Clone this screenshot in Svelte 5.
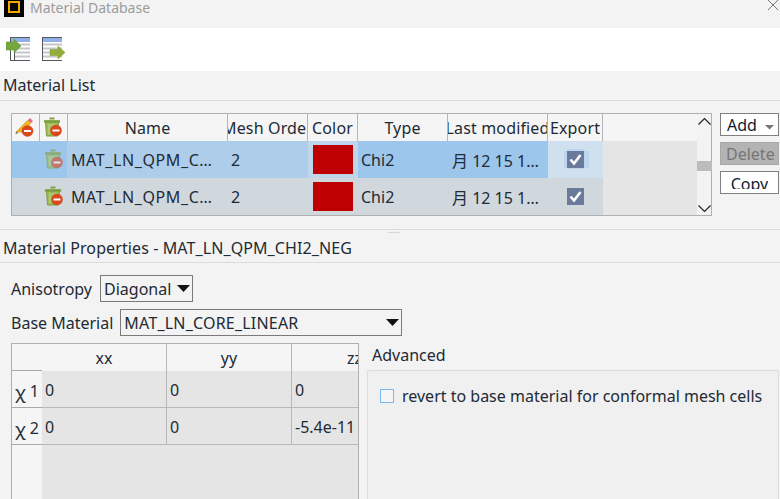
<script>
  const cols = [
    { label: 'Name', w: 160 },
    { label: 'Mesh Order', w: 80 },
    { label: 'Color', w: 50 },
    { label: 'Type', w: 90 },
    { label: 'Last modified', w: 100 },
    { label: 'Export', w: 55 }
  ];
  const rows = [{ sel: true }, { sel: false }];
  const chi = [
    { h: '1', v: ['0', '0', '0'] },
    { h: '2', v: ['0', '0', '-5.4e-11'] }
  ];
</script>

{#snippet trash(muted)}
  <svg class="cell-icon" class:muted width="21" height="21" viewBox="0 0 21 21">
    <path d="M2.500 4h13l-1 15H3.500z" fill="#9dbb58" stroke="#7e9c3e" />
    <path d="M1 4.500h16" stroke="#7e9c3e" stroke-width="2.500" />
    <path d="M6.500 1.500h5" stroke="#84a044" stroke-width="2" />
    <path d="M6 7v10M9 7v10M12 7v10" stroke="#c4d898" />
    <circle cx="13" cy="13.500" r="5.800" fill="#d9491c" />
    <path d="M9.500 13.500h7" stroke="#fff" stroke-width="2" />
  </svg>
{/snippet}

<div class="window">
  <header class="titlebar">
    <span class="logo"><i></i></span>
    <span class="title">Material Database</span>
    <svg class="close" width="12" height="11" viewBox="0 0 12 11"><path d="M1 0l10 10M11 0L1 10" stroke="#777" fill="none" /></svg>
  </header>

  <div class="toolbar">
    <svg width="25" height="25" viewBox="0 0 25 25">
      <rect x="4" y="0" width="20" height="24" fill="#fff" />
      <rect x="4" y="0" width="20" height="5" fill="#8fb0e8" />
      <path d="M4 .5h20M4.500 0v24M4 23.500h20M8.500 5v18" stroke="#55575f" stroke-width="1" fill="none" />
      <path d="M9 7.500h15M9 11.500h15M9 15.500h15M9 19.500h15" stroke="#c4c6c9" stroke-width="2" fill="none" />
      <path d="M0 5h8V2l7 7-7 7v-3H0z" fill="#74a83f" stroke="#5f9433" stroke-width=".5" />
    </svg>
    <svg width="24" height="25" viewBox="0 0 24 25">
      <rect x="0" y="0" width="20" height="24" fill="#fff" />
      <rect x="0" y="0" width="20" height="5" fill="#8fb0e8" />
      <path d="M0 .5h20M.5 0v24M0 23.500h20" stroke="#55575f" stroke-width="1" fill="none" />
      <path d="M1 7.500h19M1 11.500h19M1 15.500h19M1 19.500h19" stroke="#c4c6c9" stroke-width="2" fill="none" />
      <path d="M8 12.500h8V9l7 6.500-7 6.500v-3.500H8z" fill="#92ad3c" stroke="#7e9a32" stroke-width=".5" />
    </svg>
  </div>

  <div class="section-head list-head">Material List</div>

  <section class="list-area">
    <div class="table">
      <div class="grid-wrap">
        <div class="head-row">
          <div class="hcell ic">
            <svg width="21" height="21" viewBox="0 0 21 21">
              <path d="M1 15L13 3l3 3-9 9z" fill="#f2b71f" stroke="#c98d12" stroke-width=".6" />
              <path d="M13 3l2-2 3 3-2 2z" fill="#e26d8d" />
              <path d="M1 15l-.500 2 3-1z" fill="#555" />
              <circle cx="12.500" cy="14" r="5.800" fill="#d9491c" />
              <path d="M9 14h7" stroke="#fff" stroke-width="2" />
            </svg>
          </div>
          <div class="hcell ic">{@render trash(false)}</div>
          {#each cols as c}
            <div class="hcell" style="width:{c.w}px"><span>{c.label}</span></div>
          {/each}
        </div>
        {#each rows as r}
          <div class="row" class:sel={r.sel}>
            <div class="cell ic blank"></div>
            <div class="cell ic trashcell">{@render trash(r.sel)}</div>
            <div class="cell name text">MAT_LN_QPM_C…</div>
            <div class="cell mesh text">2</div>
            <div class="cell color"><i></i></div>
            <div class="cell type text">Chi2</div>
            <div class="cell mod text">月 12 15 1…</div>
            <div class="cell export">
              <span class="check">
                <svg width="17" height="17" viewBox="0 0 17 17"><path d="M3.500 8.500l3.500 4L13.500 4" stroke="#fff" stroke-width="2.600" fill="none" /></svg>
              </span>
            </div>
            <div class="fill"></div>
          </div>
        {/each}
      </div>
      <div class="scroll">
        <svg width="15" height="10" viewBox="0 0 15 10"><path d="M1.500 7.500l6-6 6 6" stroke="#222" stroke-width="1.200" fill="none" /></svg>
        <i></i>
        <svg width="15" height="10" viewBox="0 0 15 10"><path d="M1.500 2.500l6 6 6-6" stroke="#222" stroke-width="1.200" fill="none" /></svg>
      </div>
    </div>
    <div class="buttons">
      <div class="btn add">Add <svg width="10" height="6" viewBox="0 0 10 6"><path d="M0 1h9L4.500 5.500z" fill="#777" /></svg></div>
      <div class="btn del">Delete</div>
      <div class="btn copy"><span>Copy</span></div>
    </div>
  </section>

  <div class="splitter"><span>.....</span></div>

  <div class="section-head props-head">Material Properties - MAT_LN_QPM_CHI2_NEG</div>

  <section class="props">
    <div class="field aniso">
      <span>Anisotropy</span>
      <div class="select s1">Diagonal<svg width="13" height="8" viewBox="0 0 13 8"><path d="M0 0h13L6.500 7z" fill="#111" /></svg></div>
    </div>
    <div class="field base">
      <span>Base Material</span>
      <div class="select s2">MAT_LN_CORE_LINEAR<svg width="13" height="8" viewBox="0 0 13 8"><path d="M0 0h13L6.500 7z" fill="#111" /></svg></div>
    </div>
    <div class="lower">
      <div class="chi">
        <div class="chi-side">
          <div class="corner"></div>
          {#each chi as c}
            <div class="rowhead"><span class="x">χ</span><span>{c.h}</span></div>
          {/each}
        </div>
        <div class="chi-main">
          <div class="chi-head">
            <div>xx</div>
            <div>yy</div>
            <div>zz</div>
          </div>
          {#each chi as c}
            <div class="chi-row">
              {#each c.v as v}<div>{v}</div>{/each}
            </div>
          {/each}
        </div>
      </div>
      <div class="advanced">
        <div class="adv-title">Advanced</div>
        <div class="adv-box">
          <label class="adv-check"><i></i>revert to base material for conformal mesh cells</label>
        </div>
      </div>
    </div>
  </section>
</div>

<style>
  :global(body) {
    margin: 0;
    background: #f3f3f3;
  }
  .window {
    width: 780px;
    height: 499px;
    overflow: hidden;
    display: flex;
    flex-direction: column;
    font-family: "Noto Sans", "Noto Sans CJK SC", sans-serif;
    font-size: 16px;
    color: #222a35;
    background: #f3f3f3;
  }
  .titlebar {
    height: 28px;
    flex: none;
    display: flex;
    align-items: flex-start;
    background: #f3f3f3;
  }
  .logo {
    width: 20px;
    height: 17px;
    margin-left: 4px;
    background: #000;
    box-sizing: border-box;
    padding: 1px 0 0 4px;
  }
  .logo i {
    width: 8px;
    height: 8px;
    border: 2px solid #f5a800;
    display: block;
  }
  .title {
    margin-left: 6px;
    color: #9b9b9b;
    font-size: 14px;
    line-height: 19px;
    margin-top: -2px;
  }
  .close {
    margin-left: auto;
    margin-right: 1px;
  }
  .toolbar {
    height: 43px;
    flex: none;
    background: #fff;
    display: flex;
    align-items: center;
    padding: 0 0 0 6px;
    gap: 11px;
  }
  .section-head {
    flex: none;
    border-bottom: 1px solid #dcdcdc;
    padding-left: 3px;
    background: #f3f3f3;
    box-sizing: border-box;
    white-space: nowrap;
  }
  .list-head {
    height: 30px;
    line-height: 28px;
  }
  .list-area {
    height: 129px;
    flex: none;
    box-sizing: border-box;
    padding: 12px 1px 0 11px;
    display: flex;
    gap: 8px;
    border-bottom: 1px solid #dcdcdc;
  }
  .table {
    width: 701px;
    flex: none;
    height: 103px;
    box-sizing: border-box;
    border: 1px solid #b0b0b0;
    display: flex;
    background: #f3f3f3;
  }
  .grid-wrap {
    width: 685px;
    flex: none;
  }
  .head-row {
    display: flex;
    height: 27px;
    background: #f5f5f5;
  }
  .hcell {
    box-sizing: border-box;
    flex: none;
    height: 27px;
    border-right: 1px solid #b5b5b5;
    display: flex;
    align-items: center;
    justify-content: center;
    overflow: hidden;
    white-space: nowrap;
    letter-spacing: .15px;
  }
  .hcell span {
    flex: none;
  }
  .hcell.ic {
    width: 28px;
  }
  .row {
    display: flex;
    height: 37px;
    background: #d0d8de;
  }
  .row .cell {
    flex: none;
    display: flex;
    align-items: center;
    box-sizing: border-box;
  }
  .row .ic {
    width: 28px;
    justify-content: center;
  }
  .text {
    padding-left: 3px;
    white-space: nowrap;
    overflow: hidden;
  }
  .name { width: 160px; letter-spacing: .6px; }
  .mesh { width: 80px; }
  .color { width: 50px; justify-content: center; }
  .color i {
    display: block;
    width: 40px;
    height: 29px;
    background: #bf0000;
  }
  .type { width: 90px; }
  .mod { width: 100px; padding-left: 4px; }
  .export { width: 55px; justify-content: center; }
  .check {
    width: 17px;
    height: 17px;
    background: #6b7a9c;
    display: block;
  }
  .check svg { display: block; }
  .fill {
    flex: 1;
    background: #e5e5e5;
    align-self: stretch;
  }
  .row.sel { background: #aecdea; }
  .row.sel .blank,
  .row.sel .trashcell,
  .row.sel .type,
  .row.sel .mod { background: #9cc6ec; }
  .row.sel .trashcell { background: linear-gradient(to right, #9cc6ec 27px, #aecdea 27px); }
  .row.sel .color { background: #bfd5ea; }
  .row.sel .export { background: #d0e0ee; }
  .row.sel .check { box-shadow: -3px 0 0 #bcd6f0, 5px 0 0 #bcd6f0, 0 -2px 0 #bcd6f0, 0 1px 0 #bcd6f0; }
  .cell-icon.muted { opacity: .62; }
  .scroll {
    flex: 1;
    display: flex;
    flex-direction: column;
    align-items: center;
    justify-content: space-between;
    position: relative;
    padding: 3px 0 2px;
    box-sizing: border-box;
  }
  .scroll i {
    display: block;
    width: 100%;
    height: 10px;
    background: #bcbcbc;
    position: absolute;
    top: 47px;
  }
  .buttons {
    width: 59px;
    flex: none;
    display: flex;
    flex-direction: column;
  }
  .btn {
    box-sizing: border-box;
    width: 59px;
    height: 23px;
    border: 1px solid #808080;
    background: #fff;
    color: #0f1c33;
    display: flex;
    align-items: center;
    padding-left: 6px;
    overflow: hidden;
    white-space: nowrap;
  }
  .btn.add {
    gap: 8px;
  }
  .btn.add svg { margin-top: 4px; }
  .btn.del {
    margin-top: 6px;
    background: #b3b3b3;
    border-color: #a8a8a8;
    color: #767676;
    padding-left: 5px;
  }
  .btn.copy {
    margin-top: 6px;
    justify-content: center;
    padding: 0;
    align-items: flex-start;
  }
  .btn.copy span {
    display: block;
    height: 16px;
    overflow: hidden;
    line-height: 22px;
    margin-top: 1px;
  }
  .splitter {
    height: 1px;
    flex: none;
    position: relative;
  }
  .splitter span {
    position: absolute;
    left: 388px;
    top: -5px;
    font-size: 9px;
    line-height: 10px;
    color: #b0b0b0;
  }
  .props-head {
    height: 32px;
    line-height: 34px;
    letter-spacing: .1px;
  }
  .props {
    flex: 1;
    min-height: 0;
    padding: 0 1px 0 11px;
    display: flex;
    flex-direction: column;
  }
  .field {
    display: flex;
    align-items: center;
    height: 27px;
    white-space: nowrap;
  }
  .aniso { margin-top: 12px; gap: 8px; }
  .base { margin-top: 7px; gap: 7px; }
  .select {
    box-sizing: border-box;
    height: 27px;
    border: 1px solid #7a7a7a;
    background: #f3f3f3;
    display: flex;
    align-items: center;
    justify-content: space-between;
    padding: 0 2px 0 3px;
    white-space: nowrap;
  }
  .s1 { width: 93px; }
  .s2 { width: 282px; letter-spacing: .2px; }
  .lower {
    margin-top: 7px;
    display: flex;
    flex: 1;
    min-height: 0;
    gap: 8px;
  }
  .chi {
    width: 348px;
    flex: none;
    box-sizing: border-box;
    border: 1px solid #b0b0b0;
    border-bottom: none;
    display: flex;
    overflow: hidden;
  }
  .chi-side {
    width: 30px;
    flex: none;
    background: #f5f5f5;
  }
  .corner {
    height: 27px;
    box-sizing: border-box;
    border-bottom: 1px solid #a8a8a8;
  }
  .rowhead {
    height: 37px;
    border-bottom: 1px solid #a8a8a8;
    display: flex;
    align-items: center;
    gap: 4px;
    padding: 3px 0 0 3px;
    box-sizing: border-box;
    white-space: nowrap;
  }
  .rowhead .x {
    font-size: 18px;
    line-height: 18px;
    padding-top: 3px;
  }
  .chi-main {
    flex: 1;
    min-width: 0;
    background: #e5e5e5;
    overflow: hidden;
  }
  .chi-head,
  .chi-row {
    display: grid;
    grid-template-columns: 125px 125px 125px;
  }
  .chi-head {
    height: 27px;
    background: #f5f5f5;
  }
  .chi-head div {
    border-right: 1px solid #b5b5b5;
    display: flex;
    justify-content: center;
    align-items: center;
  }
  .chi-head div:last-child { border-right: 0; }
  .chi-row {
    height: 37px;
    box-sizing: border-box;
    border-bottom: 1px solid #b8b8b8;
  }
  .chi-row div {
    border-right: 1px solid #b8b8b8;
    padding: 2px 0 0 3px;
    display: flex;
    align-items: center;
    overflow: hidden;
    white-space: nowrap;
  }
  .chi-row div:last-child { border-right: 0; }
  .advanced {
    flex: 1;
    min-width: 0;
    display: flex;
    flex-direction: column;
  }
  .adv-title {
    height: 27px;
    line-height: 24px;
    padding-left: 5px;
  }
  .adv-box {
    flex: 1;
    border: 1px solid #dcdcdc;
    border-bottom: none;
    background: #f0f0f0;
    border-radius: 2px 2px 0 0;
    padding: 15px 0 0 12px;
  }
  .adv-check {
    display: flex;
    align-items: center;
    gap: 8px;
    white-space: nowrap;
    line-height: 20px;
  }
  .adv-check i {
    display: block;
    width: 12px;
    height: 12px;
    border: 1px solid #7ab8f5;
    background: #f5f5f5;
  }
</style>
